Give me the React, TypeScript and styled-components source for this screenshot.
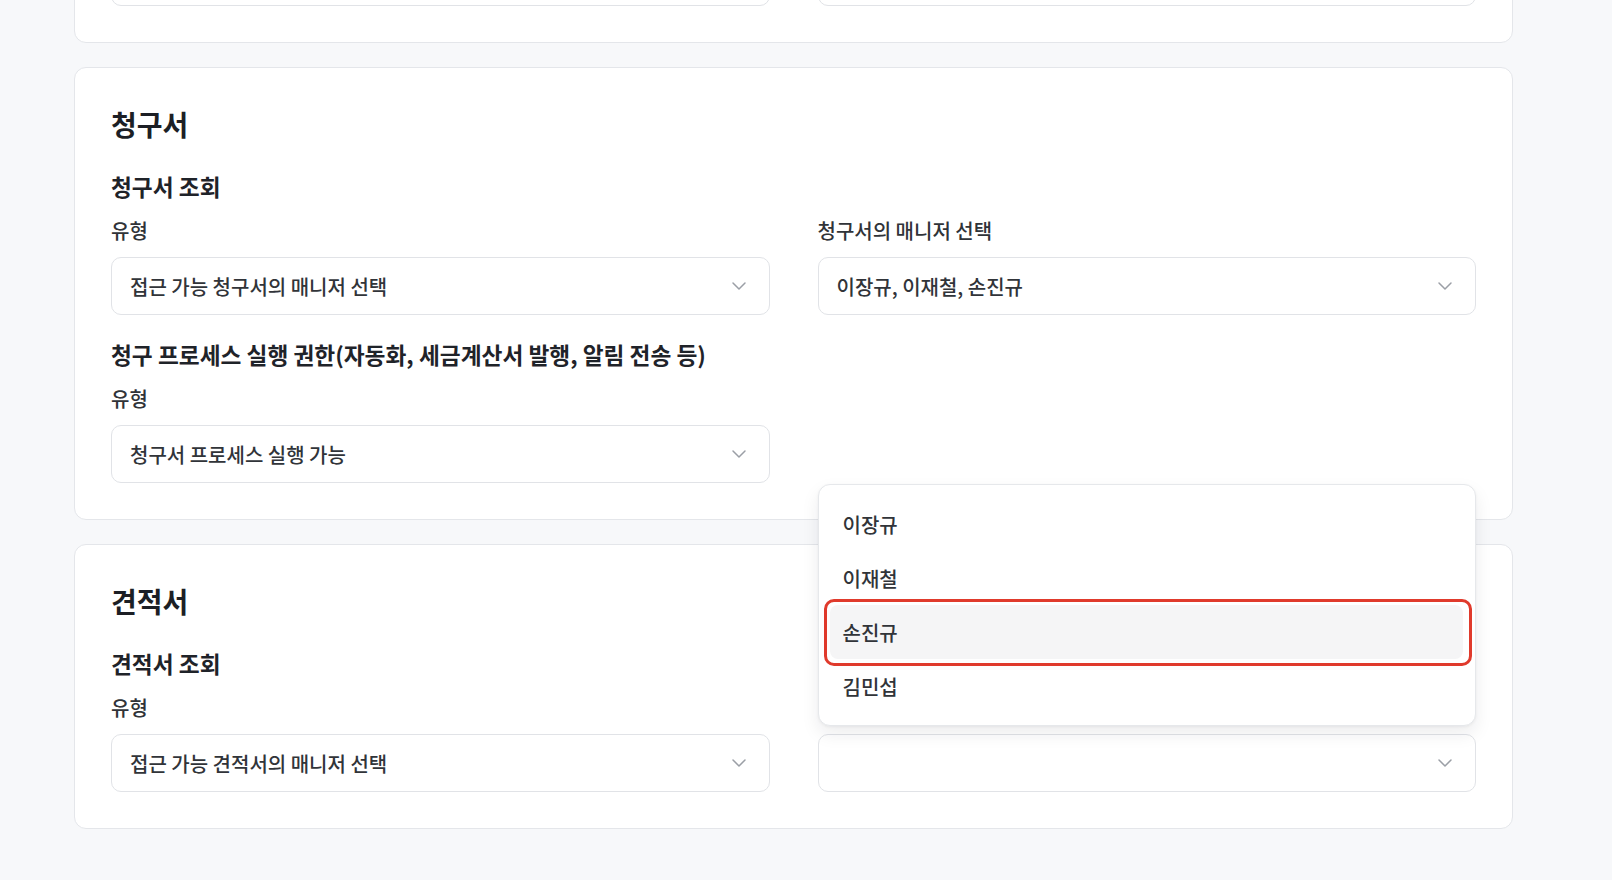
import React from 'react';
import styled, { createGlobalStyle } from 'styled-components';
import { ChevronDown } from 'lucide-react';

const GlobalStyle = createGlobalStyle`
  body {
    margin: 0;
    background: #f7f8fa;
    font-family: 'Noto Sans CJK KR', 'Noto Sans', sans-serif;
    color: #333;
  }
`;

const Page = styled.div`
  display: flex;
  flex-direction: column;
  gap: 24px;
  padding: 0 99px 40px 74px;
  margin-top: -131px;
`;

const Card = styled.section`
  background: #fff;
  border: 1px solid #e4e6ea;
  border-radius: 12px;
  padding: 38px 36px 36px;
`;

const Title = styled.h2`
  margin: 0 0 29px;
  font-size: 28px;
  line-height: 36px;
  font-weight: 700;
  color: #1c1f25;
`;

const Group = styled.div`
  & + & {
    margin-top: 24px;
  }
`;

const Subtitle = styled.h3`
  margin: 0 0 14px;
  font-size: 22.7px;
  line-height: 32px;
  font-weight: 700;
  color: #1f2329;
`;

const Row = styled.div`
  display: grid;
  grid-template-columns: 1fr 1fr;
  column-gap: 48px;
`;

const Field = styled.div`
  display: flex;
  flex-direction: column;
  gap: 12px;
`;

const Label = styled.div`
  font-size: 20px;
  line-height: 28px;
  font-weight: 500;
  color: #303338;
`;

const SelectWrap = styled.div`
  position: relative;
`;

const SelectBox = styled.div`
  height: 58px;
  box-sizing: border-box;
  border: 1px solid #e1e3e7;
  border-radius: 10px;
  background: #fff;
  display: flex;
  align-items: center;
  justify-content: space-between;
  padding: 0 18px;
  font-size: 20px;
  font-weight: 500;
  color: #313439;

  svg {
    color: #9b9fa6;
    flex-shrink: 0;
  }
`;

const Menu = styled.ul`
  position: absolute;
  left: 0;
  right: 0;
  bottom: calc(100% + 8px);
  z-index: 10;
  margin: 0;
  padding: 12px 12px 12px 11px;
  list-style: none;
  background: #fff;
  border: 1px solid #e6e8eb;
  border-radius: 12px;
  box-shadow: 0 8px 18px rgba(20, 24, 32, 0.08), 0 1px 3px rgba(20, 24, 32, 0.05);
`;

const MenuItem = styled.li<{ $active?: boolean }>`
  position: relative;
  height: 54px;
  display: flex;
  align-items: center;
  padding: 0 13px;
  border-radius: 8px;
  font-size: 20px;
  font-weight: 500;
  color: #313439;
  background: ${(p) => (p.$active ? '#f5f5f6' : 'transparent')};

  ${(p) =>
    p.$active &&
    `
    &::after {
      content: '';
      position: absolute;
      inset: -6px -9px -7px -6px;
      border: 3px solid #e03a2c;
      border-radius: 10px;
      pointer-events: none;
    }
  `}
`;

const Select: React.FC<{ value?: string; children?: React.ReactNode }> = ({ value, children }) => (
  <SelectWrap>
    <SelectBox>
      <span>{value}</span>
      <ChevronDown size={24} strokeWidth={1.5} />
    </SelectBox>
    {children}
  </SelectWrap>
);

const managers = ['이장규', '이재철', '손진규', '김민섭'];

const App: React.FC = () => {
  return (
    <>
      <GlobalStyle />
      <Page>
        <Card>
          <Row>
            <Field>
              <Label>유형</Label>
              <Select value="접근 가능 계약서의 매니저 선택" />
            </Field>
            <Field>
              <Label>계약서의 매니저 선택</Label>
              <Select value="이장규" />
            </Field>
          </Row>
        </Card>

        <Card>
          <Title>청구서</Title>
          <Group>
            <Subtitle>청구서 조회</Subtitle>
            <Row>
              <Field>
                <Label>유형</Label>
                <Select value="접근 가능 청구서의 매니저 선택" />
              </Field>
              <Field>
                <Label>청구서의 매니저 선택</Label>
                <Select value="이장규, 이재철, 손진규" />
              </Field>
            </Row>
          </Group>
          <Group>
            <Subtitle>청구 프로세스 실행 권한(자동화, 세금계산서 발행, 알림 전송 등)</Subtitle>
            <Row>
              <Field>
                <Label>유형</Label>
                <Select value="청구서 프로세스 실행 가능" />
              </Field>
            </Row>
          </Group>
        </Card>

        <Card>
          <Title>견적서</Title>
          <Group>
            <Subtitle>견적서 조회</Subtitle>
            <Row>
              <Field>
                <Label>유형</Label>
                <Select value="접근 가능 견적서의 매니저 선택" />
              </Field>
              <Field>
                <Label>견적서의 매니저 선택</Label>
                <Select>
                  <Menu>
                    {managers.map((name) => (
                      <MenuItem key={name} $active={name === '손진규'}>
                        {name}
                      </MenuItem>
                    ))}
                  </Menu>
                </Select>
              </Field>
            </Row>
          </Group>
        </Card>
      </Page>
    </>
  );
};

export default App;
